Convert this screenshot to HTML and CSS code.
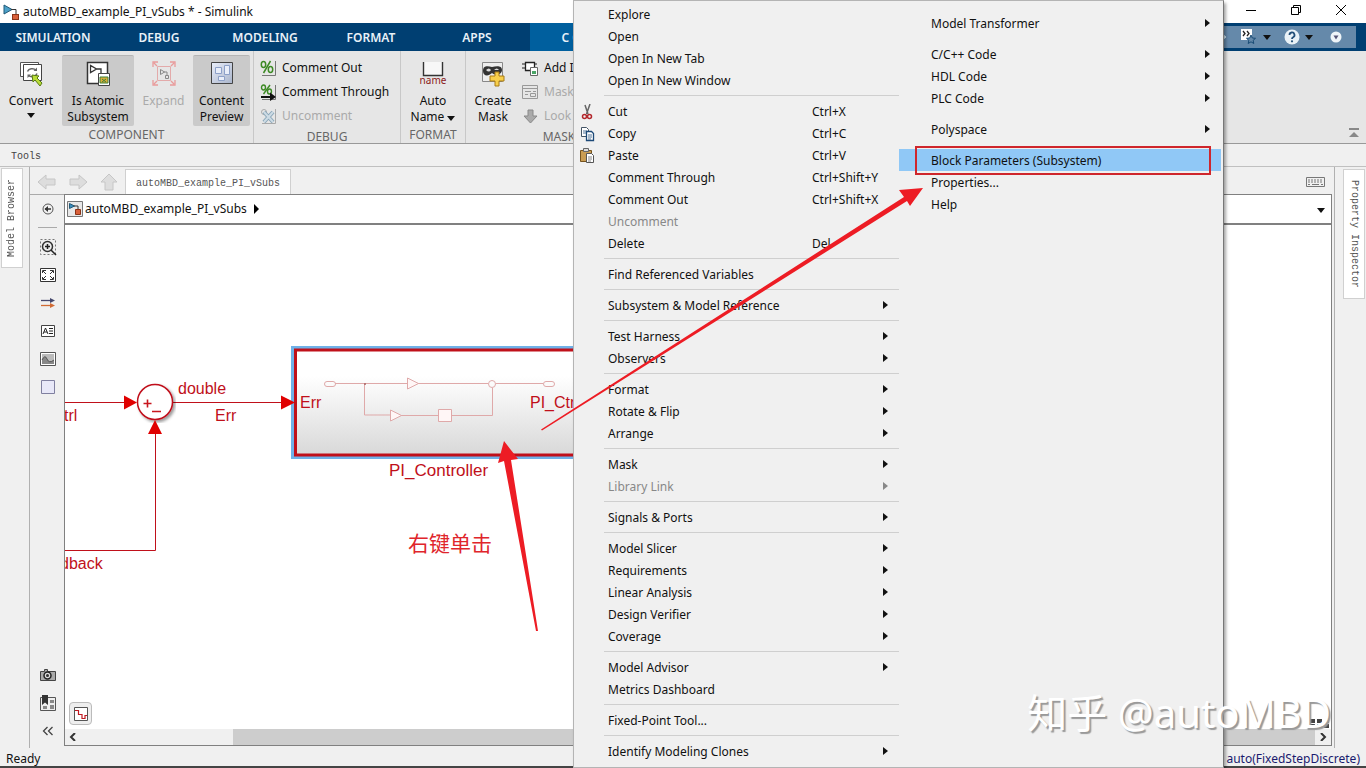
FILE: index.html
```html
<!DOCTYPE html>
<html lang="en">
<head>
<meta charset="utf-8">
<title>autoMBD_example_PI_vSubs * - Simulink</title>
<link rel="stylesheet" href="styles.css">
</head>
<body>
<div class="app">
  <header class="titlebar">
    <svg class="app-icon" width="16" height="16" viewBox="0 0 16 16"><path d="M1 1v9l8-4.500z" fill="#4ba0c8" stroke="#235a78"/><path d="M8 5.500h5v5" fill="none" stroke="#333"/><rect x="9.500" y="10.500" width="6" height="5" fill="#d9603a" stroke="#8a3317"/></svg>
    <h1 class="title">autoMBD_example_PI_vSubs * - Simulink</h1>
    <div class="window-buttons">
      <button aria-label="Minimize"><svg width="12" height="12"><path d="M1 6.500h10" stroke="#000"/></svg></button>
      <button aria-label="Restore"><svg width="12" height="12" fill="none" stroke="#000"><path d="M1.500 3.500h7v7h-7zM3.500 3.500v-2h7v7h-2"/></svg></button>
      <button aria-label="Close"><svg width="12" height="12"><path d="M1 1l10 10M11 1L1 11" stroke="#000"/></svg></button>
    </div>
  </header>

  <nav class="tabs">
    <button class="tab">SIMULATION</button>
    <button class="tab">DEBUG</button>
    <button class="tab">MODELING</button>
    <button class="tab">FORMAT</button>
    <button class="tab">APPS</button>
    <button class="tab active">C CODE</button>
    <div class="quick">
      <svg width="12" height="12"><path d="M1 6h7M6 2l5 4-5 4z" stroke="#cfe6f2" fill="#cfe6f2"/></svg>
      <button aria-label="Favorites"><svg width="18" height="18"><path d="M1 1h11v11H1z" fill="#fff"/><path d="M3 3l2 2.500L3 8M7 3l2 2.500L7 8" fill="none" stroke="#222" stroke-width="1.300"/><path d="M11 7l1.300 3 3.200.300-2.400 2.100.700 3.100-2.800-1.700-2.800 1.700.700-3.100L6.500 10.300l3.200-.300z" fill="#6589aa" stroke="#174a74"/></svg></button>
      <i class="caret"></i>
      <button aria-label="Help"><svg width="16" height="16"><circle cx="8" cy="8" r="7.500" fill="#eaf2f7"/><path d="M5.500 6a2.500 2.500 0 1 1 3.600 2.200Q8 8.800 8 10" fill="none" stroke="#234f78" stroke-width="1.800"/><circle cx="8" cy="12.300" r="1.100" fill="#234f78"/></svg></button>
      <i class="caret"></i>
      <button class="quick-last" aria-label="More"><svg width="12" height="12"><circle cx="6" cy="6" r="5.500" fill="#eef4f8"/><path d="M3.500 4.500h5L6 8.500z" fill="#557"/></svg></button>
    </div>
  </nav>

  <section class="ribbon">
    <div class="group component">
      <div class="tools">
        <button class="big convert">
          <svg width="24" height="26"><path d="M1.500 1.500h18v14h-18z" fill="#fff" stroke="#555"/><path d="M4.500 3.500h18v16h-18z" fill="#fff" stroke="#444"/><path d="M8.500 10.500a5 4 0 0 1 8.500-1.500M18 12.500a5 4 0 0 1-8.500 2" fill="none" stroke="#666" stroke-width="1.500"/><path d="M18 6.500v3.500h-3.500zM8.500 17v-3.500H12z" fill="#666"/><path d="M13 14l7 1-2 2 5 5-2 3-5-6-2 2z" fill="#b9dc38" stroke="#587a13"/></svg>
          <span>Convert</span><i class="caret"></i></button>
        <button class="big pressed atomic">
          <svg width="24" height="26"><path d="M1.500 1.500h20v21h-20z" fill="#fff" stroke="#333" stroke-width="1.500"/><path d="M4.500 4.500v7l6-3.500zM10 8h5v5" fill="none" stroke="#333" stroke-width="1.300"/><path d="M12.500 12.500h11v12h-11z" fill="#fff" stroke="#444"/><path d="M14 16h8v6h-8z" fill="#d8ad38" stroke="#3f8137"/><path d="M16 18l4 3M20 18l-4 3" stroke="#3f8137"/></svg>
          <span>Is Atomic<br>Subsystem</span></button>
        <button class="big faded expand" disabled>
          <svg width="24" height="26" fill="none"><path d="M1 6V1h5M18 1h5v5M23 19v5h-5M6 24H1v-5M2 2l3 3M22 2l-3 3M2 23l3-3M22 23l-3-3" stroke="#e99b9b" stroke-width="1.300"/><path d="M5.500 5.500h13v14h-13z" stroke="#e3aaaa"/><path d="M8.500 8.500v5l4-2.500zM12 11h3v3" stroke="#888"/><path d="M13.500 14.500h3v3h-3z" stroke="#888"/></svg>
          <span>Expand</span></button>
        <button class="big pressed preview">
          <svg width="24" height="26"><defs><linearGradient id="pv" x2="1" y2="1"><stop stop-color="#e9eefa"/><stop offset="1" stop-color="#a9b4ca"/></linearGradient></defs><path d="M1.500 1.500h21v21h-21z" fill="url(#pv)" stroke="#444"/><path d="M5.500 6.500h6v6h-6zM14.500 4.500h5v9h-5zM8.500 15.500h6v4h-6z" fill="#e9eef9" stroke="#8da0c8"/></svg>
          <span>Content<br>Preview</span></button>
      </div>
      <h2 class="group-label">COMPONENT</h2>
    </div>
    <div class="group debug">
      <div class="tools stack">
        <button class="small"><svg width="17" height="17"><path d="M15.500 1v14.500H2" fill="none" stroke="#777"/><g fill="none" stroke="#3d8a25" stroke-width="1.500"><ellipse cx="3.500" cy="4.500" rx="2.200" ry="3"/><ellipse cx="10.500" cy="9.500" rx="2.200" ry="3"/><path d="M10.500 1l-7 12"/></g></svg>Comment Out</button>
        <button class="small"><svg width="17" height="17"><path d="M15.500 1v14.500H2" fill="none" stroke="#777"/><g fill="none" stroke="#3d8a25" stroke-width="1.400"><ellipse cx="3.500" cy="3.500" rx="2" ry="2.500"/><ellipse cx="9.500" cy="7.500" rx="2" ry="2.500"/><path d="M10 1L3.500 10"/></g><path d="M1 13h10" stroke="#111" stroke-width="2"/><path d="M10 8.500l6 4.500-6 4z" fill="#111"/></svg>Comment Through</button>
        <button class="small faded" disabled><svg width="17" height="17"><path d="M15.500 1v14.500H2" fill="none" stroke="#aaa"/><circle cx="4" cy="4" r="2.500" fill="none" stroke="#aaa"/><path d="M4 4l9 10M13 4L4 14" stroke="#8ba7b9" stroke-width="4"/><path d="M4 4l9 10M13 4L4 14" stroke="#cddbe4" stroke-width="2"/></svg>Uncomment</button>
      </div>
      <h2 class="group-label">DEBUG</h2>
    </div>
    <div class="group format">
      <div class="tools">
        <button class="big">
          <svg width="30" height="26"><path d="M6 1h18v13H6z" fill="#f7f7f7"/><path d="M5.500 1v13.500h19V1" fill="none" stroke="#333" stroke-width="1.400"/><text class="name-label" x="15" y="23" text-anchor="middle">name</text></svg>
          <span>Auto<br>Name <i class="caret"></i></span></button>
      </div>
      <h2 class="group-label">FORMAT</h2>
    </div>
    <div class="group mask">
      <div class="tools">
        <button class="big create">
          <svg width="24" height="26"><path d="M1.500 1.500h20v19h-20z" fill="#eee" stroke="#888"/><path d="M2 10c0-6 5-5 9-4 4-1 10-2 10 3s-7 6-10 3c-4 4-9 3-9-2z" fill="#333"/><path d="M5 9q3-3 5 0-2 3-5 0zM13 9q3-3 5 0" fill="#ddd"/><path d="M14 11h4v4h5v5h-5v5h-4v-5H9v-5h5z" fill="#f8cf4b" stroke="#a87b15"/></svg>
          <span>Create<br>Mask</span></button>
        <div class="stack">
          <button class="small"><svg width="17" height="17"><path d="M3.500 2.500h9v8h-9z" fill="#fff" stroke="#222" stroke-width="1.300"/><path d="M0 4h3M0 8h3M13 4h2" stroke="#222"/><path d="M8.500 7.500h7v8h-7z" fill="#fff" stroke="#666"/><path d="M10 11h4v3h-4z" fill="#4aa567"/></svg>Add Icon</button>
          <button class="small faded" disabled><svg width="17" height="17" fill="none" stroke="#999"><path d="M.500 1.500h15v13H.500zM.500 4.500h15M3 7.500h6M11 7.500h3M3 10.500h3M8.500 9.500h5v3h-5z"/></svg>Mask Editor</button>
          <button class="small faded" disabled><svg width="17" height="17"><path d="M6 2h5v6h4l-6.500 7L2 8h4z" fill="#aaa" stroke="#888"/></svg>Look Under</button>
        </div>
      </div>
      <h2 class="group-label">MASK</h2>
    </div>
    <button class="collapse" aria-label="Collapse toolstrip"><svg width="12" height="12"><path d="M1 2h10" stroke="#888" stroke-width="2"/><path d="M6 5l5 5H1z" fill="#888"/></svg></button>
  </section>

  <div class="toolsbar">Tools</div>

  <main class="workspace">
    <aside class="side left"><button class="side-tab flip">Model Browser</button></aside>
    <div class="center">
      <div class="doc-row">
        <button aria-label="Back"><svg width="20" height="18"><path d="M1 9l8-7v4h9v6H9v4z" fill="#ddd" stroke="#c6c6c6"/></svg></button>
        <button aria-label="Forward"><svg width="20" height="18"><path d="M19 9l-8-7v4H2v6h9v4z" fill="#ddd" stroke="#c6c6c6"/></svg></button>
        <button aria-label="Up"><svg width="20" height="18"><path d="M10 1l8 8h-4v8H6V9H2z" fill="#ddd" stroke="#c6c6c6"/></svg></button>
        <button class="doc-tab">autoMBD_example_PI_vSubs</button>
        <svg class="keyboard" width="19" height="12" fill="none" stroke="#777"><path d="M.500 1.500h18v9H.500z"/><path d="M2 4h15M2 6h15" stroke-dasharray="2 1"/><path d="M2 8.500h2M6 8.500h7M15 8.500h2"/></svg>
      </div>
      <div class="editor-row">
        <div class="palette">
          <button aria-label="Hide browser"><svg width="12" height="12"><circle cx="6" cy="6" r="5" fill="none" stroke="#555"/><path d="M3 6h6" stroke="#333" stroke-width="1.500"/><path d="M2.500 6L6 3v6z" fill="#333"/></svg></button>
          <hr>
          <button aria-label="Zoom"><svg width="17" height="17" fill="none"><path d="M.500.500h15v15H.500z" stroke="#777" stroke-dasharray="2 2"/><circle cx="7.500" cy="7.500" r="5" fill="#eee" stroke="#333" stroke-width="1.500"/><path d="M5 7.500h5M7.500 5v5M11 11l5 5" stroke="#222" stroke-width="1.500"/></svg></button>
          <button aria-label="Fit to view"><svg width="16" height="14"><path d="M.500.500h15v13H.500z" fill="#fff" stroke="#333"/><path d="M2.500 5V2.500H6M10 2.500h3.500V5M13.500 9v2.500H10M6 11.500H2.500V9M3 3l3 3M13 3l-3 3M3 11l3-3M13 11l-3-3" stroke="#333" fill="none"/></svg></button>
          <button aria-label="Signals"><svg width="16" height="12"><path d="M1 3.500h10" stroke="#44476c" stroke-width="1.300"/><path d="M10 1l5 2.500L10 6z" fill="#44476c"/><path d="M1 8.500h10" stroke="#d06b35" stroke-width="1.300"/><path d="M10 6l5 2.500-5 2.500z" fill="#d06b35"/></svg></button>
          <button aria-label="Annotation"><svg width="14" height="12"><path d="M.500.500h13v11H.500z" fill="#fff" stroke="#444"/><path d="M2 9l2.500-6L7 9M3 7h3M8 3.500h4M8 6h4M8 8.500h4" fill="none" stroke="#222"/></svg></button>
          <button aria-label="Image"><svg width="16" height="14"><path d="M.500.500h15v13H.500z" fill="#fff" stroke="#555"/><path d="M2 2h12v10H2z" fill="#bbb"/><path d="M2 8q3-6 5-1t7 1v4H2z" fill="#888"/><path d="M2 8q3-6 5-1t7 1" fill="none" stroke="#555"/></svg></button>
          <button aria-label="Area"><svg width="14" height="14"><path d="M.500.500h13v13H.500z" fill="#e8e8f8" stroke="#8080a0"/></svg></button>
          <span class="spacer"></span>
          <button aria-label="Screenshot"><svg width="16" height="12"><path d="M.500 2.500h4v-2h3v2h8v9H.500z" fill="#aaa" stroke="#444"/><circle cx="7.500" cy="6.500" r="3.500" fill="#ddd" stroke="#222" stroke-width="1.500"/><circle cx="7.500" cy="6.500" r="1.500" fill="#333"/></svg></button>
          <button aria-label="Bookmarks"><svg width="16" height="16"><path d="M.500 2.500h15v13H.500z" fill="#eee" stroke="#555"/><path d="M2 0h6v10L5 7.500 2 10z" fill="#333"/><path d="M10 5h4v3h-4zM10 10h4v4h-4zM3 11h4v3H3z" fill="#888"/></svg></button>
          <button aria-label="Collapse"><svg width="12" height="10"><path d="M5.500 1l-4 4 4 4M10.500 1l-4 4 4 4" fill="none" stroke="#444" stroke-width="1.300"/></svg></button>
        </div>
        <div class="editor">
          <div class="crumbs">
            <svg width="16" height="16"><path d="M.500.500h15v15H.500z" fill="#e8e8e8" stroke="#777"/><path d="M2.500 2.500v5l5-2.500z" fill="#3b8dbd" stroke="#235a78"/><path d="M7 5h4v4" fill="none" stroke="#333"/><path d="M8.500 8.500h5v5h-5z" fill="#d9603a" stroke="#8a3317"/></svg>
            <a href="#">autoMBD_example_PI_vSubs</a>
            <i class="arrow"></i>
            <button class="crumb-menu" aria-label="History"><i class="caret"></i></button>
          </div>
          <div class="canvas">
            <svg class="diagram" width="100%" height="100%">
              <defs>
                <linearGradient id="blk" x2="0" y2="1"><stop offset=".250" stop-color="#fff"/><stop offset="1" stop-color="#d8d8d8"/></linearGradient>
                <filter id="sh"><feDropShadow dx="2" dy="2" stdDeviation="1.500" flood-opacity=".4"/></filter>
              </defs>
              <g transform="translate(-65 -225)">
                <g fill="none" stroke="#c0101a"><path d="M60 402.500h66M173 402.500h110M60 550.500h95.500V432"/></g>
                <circle cx="155" cy="402" r="17.500" fill="#fff" stroke="#c0101a" stroke-width="1.500" filter="url(#sh)"/>
                <path d="M143.500 403.500h8M147.500 399.500v8M152 411.500h9" stroke="#c8161e" stroke-width="1.600"/>
                <rect x="291" y="346" width="320" height="113" fill="#6fb1e8"/>
                <rect x="295.500" y="350" width="320" height="105" fill="url(#blk)" stroke="#c0101a" stroke-width="3"/>
                <path d="M124 395.500v14l13-7zM281 395.500v14l14-7zM148 434h14l-7-14z" fill="#e00000"/>
                <g fill="none" stroke="#dfa9a9"><path d="M335 383.500h72M418 383.500h70M496 383.500h47M364.500 383v32h26M401 415.500h37M452 415.500h40.500V388"/><path d="M407.500 378v11l11-5.500zM390.500 410v11l11-5.500zM438.500 409.500h13v12h-13z" fill="#fff6f6"/><circle cx="492" cy="384" r="3.500"/><rect x="324.500" y="381.500" width="11" height="5" rx="2.500"/><rect x="543.500" y="381.500" width="11" height="5" rx="2.500"/></g>
                <circle cx="365" cy="384" r="1" fill="#a66"/>
                <text x="64" y="421">trl</text>
                <text x="178" y="394">double</text>
                <text x="215" y="421">Err</text>
                <text x="300" y="408">Err</text>
                <text x="530" y="408">PI_Ctrl</text>
                <text class="block-name" x="389" y="476">PI_Controller</text>
                <text x="60" y="569">dback</text>
              </g>
            </svg>
            <button class="badge" aria-label="Solver"><svg width="14" height="14"><path d="M.500.500h13v13H.500z" fill="#fff" stroke="#555"/><path d="M1 3.500h3.500v4H8v4h3v-3h2" fill="none" stroke="#c01820" stroke-width="1.200"/></svg></button>
            <svg class="grip" width="20" height="10"><path d="M0 3h20M0 8h20" stroke="#444" stroke-width="4" stroke-dasharray="5 2"/></svg>
          </div>
          <div class="hscroll">
            <button aria-label="Scroll left"><svg width="8" height="8"><path d="M6 0L2 4l4 4" fill="none" stroke="#333" stroke-width="2"/></svg></button>
            <div class="track"><div class="thumb"></div></div>
            <button aria-label="Scroll right"><svg width="8" height="8"><path d="M2 0l4 4-4 4" fill="none" stroke="#333" stroke-width="2"/></svg></button>
          </div>
        </div>
      </div>
    </div>
    <aside class="side right"><button class="side-tab">Property Inspector</button></aside>
  </main>

  <footer class="status"><span>Ready</span><a href="#">auto(FixedStepDiscrete)</a></footer>
</div>

<div class="menu">
  <div class="col">
    <button>Explore</button>
    <button>Open</button>
    <button>Open In New Tab</button>
    <button>Open In New Window</button>
    <hr>
    <button><svg width="16" height="16" fill="none"><path d="M10 0L6.500 10M5 1l3 9" stroke="#666" stroke-width="1.500"/><circle cx="4.500" cy="12.500" r="2" stroke="#b3282d" stroke-width="1.500"/><circle cx="9.500" cy="12.500" r="2" stroke="#b3282d" stroke-width="1.500"/></svg>Cut<kbd>Ctrl+X</kbd></button>
    <button><svg width="16" height="16"><path d="M1.500 1.500h5l2 2v7h-7z" fill="#fff" stroke="#456"/><path d="M3 5h4M3 7h4" stroke="#579"/><path d="M6.500 5.500h5l2 2v7h-7z" fill="#fff" stroke="#1d4a78" stroke-width="1.300"/><path d="M8 9h4M8 11h4M8 13h3" stroke="#579"/></svg>Copy<kbd>Ctrl+C</kbd></button>
    <button><svg width="16" height="16"><path d="M.500 2.500h11v11H.500z" fill="#c99c52" stroke="#75531e"/><path d="M3.500.500h5v3h-5z" fill="#ddd" stroke="#666"/><path d="M6.500 5.500h5l2 2v7h-7z" fill="#fff" stroke="#555"/><path d="M8 9h4M8 11h4M8 13h3" stroke="#888"/></svg>Paste<kbd>Ctrl+V</kbd></button>
    <button>Comment Through<kbd>Ctrl+Shift+Y</kbd></button>
    <button>Comment Out<kbd>Ctrl+Shift+X</kbd></button>
    <button disabled>Uncomment</button>
    <button>Delete<kbd>Del</kbd></button>
    <hr>
    <button>Find Referenced Variables</button>
    <hr>
    <button class="sub">Subsystem &amp; Model Reference</button>
    <hr>
    <button class="sub">Test Harness</button>
    <button class="sub">Observers</button>
    <hr>
    <button class="sub">Format</button>
    <button class="sub">Rotate &amp; Flip</button>
    <button class="sub">Arrange</button>
    <hr>
    <button class="sub">Mask</button>
    <button class="sub" disabled>Library Link</button>
    <hr>
    <button class="sub">Signals &amp; Ports</button>
    <hr>
    <button class="sub">Model Slicer</button>
    <button class="sub">Requirements</button>
    <button class="sub">Linear Analysis</button>
    <button class="sub">Design Verifier</button>
    <button class="sub">Coverage</button>
    <hr>
    <button class="sub">Model Advisor</button>
    <button>Metrics Dashboard</button>
    <hr>
    <button>Fixed-Point Tool...</button>
    <hr>
    <button class="sub">Identify Modeling Clones</button>
  </div>
  <div class="col second">
    <hr>
    <button class="sub">Model Transformer</button>
    <hr>
    <button class="sub">C/C++ Code</button>
    <button class="sub">HDL Code</button>
    <button class="sub">PLC Code</button>
    <hr>
    <button class="sub">Polyspace</button>
    <hr>
    <button class="selected">Block Parameters (Subsystem)</button>
    <button>Properties...</button>
    <button>Help</button>
  </div>
</div>

<svg class="notes" width="1366" height="768">
  <rect x="916" y="147" width="294" height="27" fill="none" stroke="#cf262c" stroke-width="2"/>
  <path d="M541 429.500L904 197l-5-7 24-2-13 18-3-5L542 430.500z" fill="#ed1c24"/>
  <path d="M536 631L504 461l-6 2 6-22 14 18-7 1 27 171z" fill="#ed1c24"/>
  <text x="408" y="551">右键单击</text>
</svg>
<div class="watermark">知乎 @autoMBD</div>
</body>
</html>
```
FILE: styles.css
```css
* { box-sizing: border-box; }
body {
  margin: 0;
  overflow: hidden;
  font: 12px/16px "Noto Sans", "Noto Sans CJK SC", sans-serif;
  color: #111;
}
button {
  margin: 0;
  padding: 0;
  border: 0;
  background: none;
  font: inherit;
  color: inherit;
}
svg { flex: none; }
a { color: inherit; text-decoration: none; }
hr { margin: 0; border: 0; }
h1, h2 { margin: 0; font: inherit; }

.caret {
  display: inline-block;
  border: 4px solid transparent;
  border-top: 5px solid #111;
  border-bottom: 0;
}
.arrow {
  border: 5px solid transparent;
  border-left-color: #000;
  border-right: 0;
}

.app { display: flex; flex-direction: column; height: 100vh; background: #f0f0f0; }

.titlebar { display: flex; align-items: center; height: 23px; flex: none; padding-left: 3px; gap: 4px; background: #fff; }
.title { flex: 1; }
.window-buttons { display: flex; padding-right: 3px; }
.window-buttons button { width: 45px; height: 20px; }

.tabs { display: flex; height: 28px; flex: none; background: #003f72; color: #e8f1f8; }
.tab { width: 106px; padding-top: 2px; font-weight: 600; }
.tab.active { background: #005f9e; }
.quick {
  display: flex;
  align-items: center;
  gap: 5px;
  height: 22px;
  margin: 3px 10px 3px auto;
  padding-right: 14px;
  background: #6589aa;
}
.quick button { display: flex; margin-left: 8px; }
.quick .quick-last { margin-left: 12px; }

.ribbon { display: flex; height: 93px; flex: none; background: #e6e6e6; border-bottom: 1px solid #999; }
.group { display: flex; flex-direction: column; padding-top: 4px; border-right: 1px solid #c8c8c8; }
.group-label { padding-top: 1px; text-align: center; color: #666; }
.tools { display: flex; height: 73px; }
.component { width: 254px; }
.debug { width: 147px; }
.format { width: 65px; }
.mask { width: 187px; }
.big { display: flex; flex-direction: column; align-items: center; flex: 1; padding-top: 6px; }
.big > span { margin-top: 6px; white-space: nowrap; }
.big > .caret { margin-top: 4px; }
.convert { flex: 0 0 62px; }
.atomic { flex: 0 0 72px; }
.expand { flex: 0 0 59px; }
.preview { flex: 0 0 57px; }
.create { flex: 0 0 54px; }
.pressed { background: #cacaca; border-top: 1px solid #b5b5b5; border-radius: 2px; padding-top: 5px; }
.faded { color: #aaa; }
.stack { display: flex; flex-direction: column; flex: 1; padding-top: 1px; }
.small { display: flex; align-items: center; gap: 5px; height: 24px; flex: none; padding-left: 6px; white-space: nowrap; }
.mask .small { padding-left: 2px; }
.name-label { font: 10px "Noto Sans", sans-serif; fill: #8b1a1a; }
.collapse { align-self: flex-end; margin: 0 6px 0 auto; }

.toolsbar {
  height: 23px;
  flex: none;
  padding: 5px 11px;
  border-bottom: 1px solid #c0c0c0;
  font: 10px/16px "Liberation Mono", monospace;
  color: #444;
}

.workspace { display: flex; flex: 1; min-height: 0; }
.side { width: 30px; flex: none; padding: 1px 0; }
.left { border-right: 1px solid #b0b0b0; }
.right { width: 32px; margin-left: 2px; border-left: 1px solid #b0b0b0; padding: 2px 0 0 8px; }
.side-tab {
  width: 22px;
  height: 100px;
  margin-left: 1px;
  writing-mode: vertical-rl;
  background: #fff;
  border: 1px solid #d0d0d0;
  font: 10px/20px "Liberation Mono", monospace;
  color: #555;
}
.flip { transform: rotate(180deg); }
.right .side-tab { height: 130px; margin-left: 0; }

.center { display: flex; flex-direction: column; flex: 1; min-width: 0; }
.doc-row { display: flex; align-items: flex-end; height: 27px; flex: none; padding-left: 7px; gap: 11px; }
.doc-row button { display: flex; padding-bottom: 3px; }
.doc-row .doc-tab {
  height: 25px;
  margin-left: -5px;
  padding: 3px 10px 0;
  align-items: center;
  background: #fff;
  border: 1px solid #d0d0d0;
  border-bottom: 0;
  font: 10px/16px "Liberation Mono", monospace;
  color: #555;
}
.keyboard { margin: 0 7px 6px auto; }
.editor-row { display: flex; flex: 1; min-height: 0; }
.palette { display: flex; flex-direction: column; width: 34px; flex: none; border-top: 1px solid #aaa; }
.palette button { display: flex; align-items: center; justify-content: center; height: 28px; padding-left: 2px; }
.palette hr { width: 19px; height: 5px; margin: 0 0 5px 8px; border-bottom: 1px solid #aaa; }
.spacer { flex: 1; }
.editor { display: flex; flex-direction: column; flex: 1; min-width: 0; border: 1px solid #808080; }
.palette { margin-bottom: 3px; }
.editor { margin-bottom: 2px; }
.crumbs { display: flex; align-items: center; gap: 2px; height: 30px; flex: none; padding-left: 2px; background: #fff; border-bottom: 2px solid #808080; }
.crumbs .arrow { margin-left: 5px; }
.crumb-menu { margin: 0 6px 0 auto; }
.canvas { position: relative; flex: 1; min-height: 0; background: #fff; }
.diagram { display: block; }
.diagram text { font: 16px "Liberation Sans", Arial, sans-serif; fill: #c0101a; }
.diagram .block-name { font-size: 17px; }
.badge {
  position: absolute;
  left: 4px;
  bottom: 4px;
  display: grid;
  place-items: center;
  width: 23px;
  height: 23px;
  background: #eee;
  border: 1px solid #bbb;
  border-radius: 4px;
}
.grip { position: absolute; right: 1px; bottom: 1px; }
.hscroll { display: flex; height: 16px; flex: none; }
.hscroll button { display: grid; place-items: center; width: 16px; }
.track { flex: 1; padding-left: 152px; }
.thumb { height: 16px; background: #cdcdcd; }

.status { display: flex; align-items: center; justify-content: space-between; height: 20px; flex: none; padding: 3px 6px 0; border-bottom: 2px solid #444; }
.status a { color: #1a1a6e; }

.menu {
  position: absolute;
  top: 0;
  left: 573px;
  display: flex;
  width: 651px;
  height: 100vh;
  padding: 2px 2px 0 0;
  background: #f0f0f0;
  border: 1px solid #b4b4b4;
  border-right-color: #777;
  box-shadow: 2px 3px 3px rgba(0, 0, 0, .35);
}
.col { flex: 0 0 325px; min-width: 0; }
.col.second { flex: 1; }
.menu button { display: flex; align-items: center; width: 100%; height: 22px; padding: 2px 0 0 34px; position: relative; text-align: left; }
.menu button:disabled { color: #888; }
.menu button svg { margin: 0 12px 0 -28px; }
.menu kbd { position: absolute; left: 238px; font: inherit; }
.menu hr { height: 9px; margin-left: 30px; background: linear-gradient(#cfcfcf, #cfcfcf) 0 4px / 100% 1px no-repeat; }
.menu .second hr { background: none; }
.menu .second button { padding-left: 32px; }
.menu .selected { background: #90c8f6; }
.sub::after {
  content: "";
  margin: 0 11px 2px auto;
  border: 4px solid transparent;
  border-left: 5px solid currentColor;
  border-right: 0;
}

.notes { position: absolute; top: 0; left: 0; pointer-events: none; }
.notes text { font: 21px "Noto Sans CJK SC", sans-serif; fill: #e0252b; }
.watermark {
  position: absolute;
  right: 35px;
  bottom: 28px;
  font: 40px/54px "Noto Sans", "Noto Sans CJK SC", sans-serif;
  color: #fff;
  text-shadow: 2px 2px 1px #999;
  white-space: nowrap;
}
```
